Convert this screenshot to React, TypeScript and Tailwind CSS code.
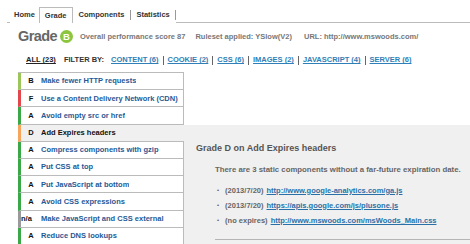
import React from "react";

const rules = [
  { grade: "B", title: "Make fewer HTTP requests", bar: "border-l-[#9cc65a]" },
  { grade: "F", title: "Use a Content Delivery Network (CDN)", bar: "border-l-[#e2474c]" },
  { grade: "A", title: "Avoid empty src or href", bar: "border-l-[#3aa846]" },
  { grade: "D", title: "Add Expires headers", bar: "border-l-[#f6a65c]", selected: true },
  { grade: "A", title: "Compress components with gzip", bar: "border-l-[#3aa846]" },
  { grade: "A", title: "Put CSS at top", bar: "border-l-[#3aa846]" },
  { grade: "A", title: "Put JavaScript at bottom", bar: "border-l-[#3aa846]" },
  { grade: "A", title: "Avoid CSS expressions", bar: "border-l-[#3aa846]" },
  { grade: "n/a", title: "Make JavaScript and CSS external", bar: "border-l-[#9a9a9a]" },
  { grade: "A", title: "Reduce DNS lookups", bar: "border-l-[#3aa846]" },
];

const filters = ["CONTENT (6)", "COOKIE (2)", "CSS (6)", "IMAGES (2)", "JAVASCRIPT (4)", "SERVER (6)"];

const expires = [
  { date: "(2013/7/20)", url: "http://www.google-analytics.com/ga.js" },
  { date: "(2013/7/20)", url: "https://apis.google.com/js/plusone.js" },
  { date: "(no expires)", url: "http://www.mswoods.com/msWoods_Main.css" },
];

export default function App() {
  return (
    <div className="h-[244px] w-[470px] overflow-hidden bg-white font-['Liberation_Sans',Arial,sans-serif] text-[7.5px] font-bold text-[#555]">
      {/* tabs */}
      <div className="flex h-[23px] items-end pt-[7px]">
        <div className="ml-[7px] h-px w-[3px] bg-[#bbb]" />
        <div className="flex h-[16px] items-center px-[4px] text-[#333]">Home</div>
        <div className="flex h-[16px] items-center border-x border-t border-[#bbb] bg-white px-[5px] text-[#333]">
          Grade
        </div>
        <div className="flex h-[16px] items-center">
          <span className="px-[6px] text-[#333]">Components</span>
          <span className="h-[10px] w-px bg-[#999]" />
          <span className="px-[5px] text-[#333]">Statistics</span>
          <span className="h-[10px] w-px bg-[#999]" />
        </div>
        <div className="h-px flex-1 bg-[#bbb]" />
      </div>

      {/* grade header */}
      <div className="flex h-[27px] items-center pl-[18px]">
        <span className="text-[14.5px] leading-none tracking-[-0.6px] text-[#666]">Grade</span>
        <span className="ml-[3px] flex h-[13px] w-[13px] items-center justify-center rounded-full bg-[#8cc63f] text-[9.5px] leading-none text-white">
          B
        </span>
        <span className="ml-[7px] text-[#777]">Overall performance score 87</span>
        <span className="ml-[10px] text-[#777]">Ruleset applied: YSlow(V2)</span>
        <span className="ml-[12px] text-[#777]">URL: http://www.mswoods.com/</span>
      </div>

      {/* filters */}
      <div className="flex h-[22px] items-center pl-[26px] pb-[2px]">
        <span className="text-[#222] underline">ALL (23)</span>
        <span className="ml-[8px] text-[#333]">FILTER BY:</span>
        <div className="ml-[7px] flex items-center">
          {filters.map((f, i) => (
            <React.Fragment key={f}>
              {i > 0 && <span className="mx-[4px] h-[9px] w-px bg-[#666]" />}
              <span className="text-[#2f7fb8] underline">{f}</span>
            </React.Fragment>
          ))}
        </div>
      </div>

      {/* rules + detail */}
      <div className="flex pl-[18px]">
        <div className="w-[166px] border-t border-[#bbb]">
          {rules.map((r, i) => (
            <div
              key={i}
              className={`flex h-[17.2px] items-center border-b border-l-[3px] border-b-[#bbb] ${r.bar} ${
                r.selected ? "w-[167px] bg-[#f0f0f0] text-[#111]" : "border-r border-r-[#bbb] text-[#1f5a96]"
              }`}
            >
              <span className={`w-[20px] shrink-0 text-[#111] ${r.grade === "n/a" ? "text-left" : "text-center"}`}>
                {r.grade}
              </span>
              <span className="truncate">{r.title}</span>
            </div>
          ))}
        </div>

        <div className="flex-1 pt-[52.6px]">
          <div className="h-[130px] bg-[#f0f0f0] pt-[17px]">
            <div className="pl-[12px] text-[9px] text-[#555]">Grade D on Add Expires headers</div>
            <div className="mt-[9px] pl-[31px] text-[7.8px] text-[#666]">
              There are 3 static components without a far-future expiration date.
            </div>
            <ul className="mt-[7px] pl-[33px]">
              {expires.map((e) => (
                <li key={e.url} className="flex h-[15px] items-center text-[#666]">
                  <span className="mr-[6px] text-[6px]">•</span>
                  <span>{e.date}</span>
                  <span className="ml-[3px] text-[#2a70a8] underline">{e.url}</span>
                </li>
              ))}
            </ul>
            <div className="ml-[31px] mt-[11px] h-px bg-[#b5b5b5]" />
          </div>
        </div>
      </div>
    </div>
  );
}
